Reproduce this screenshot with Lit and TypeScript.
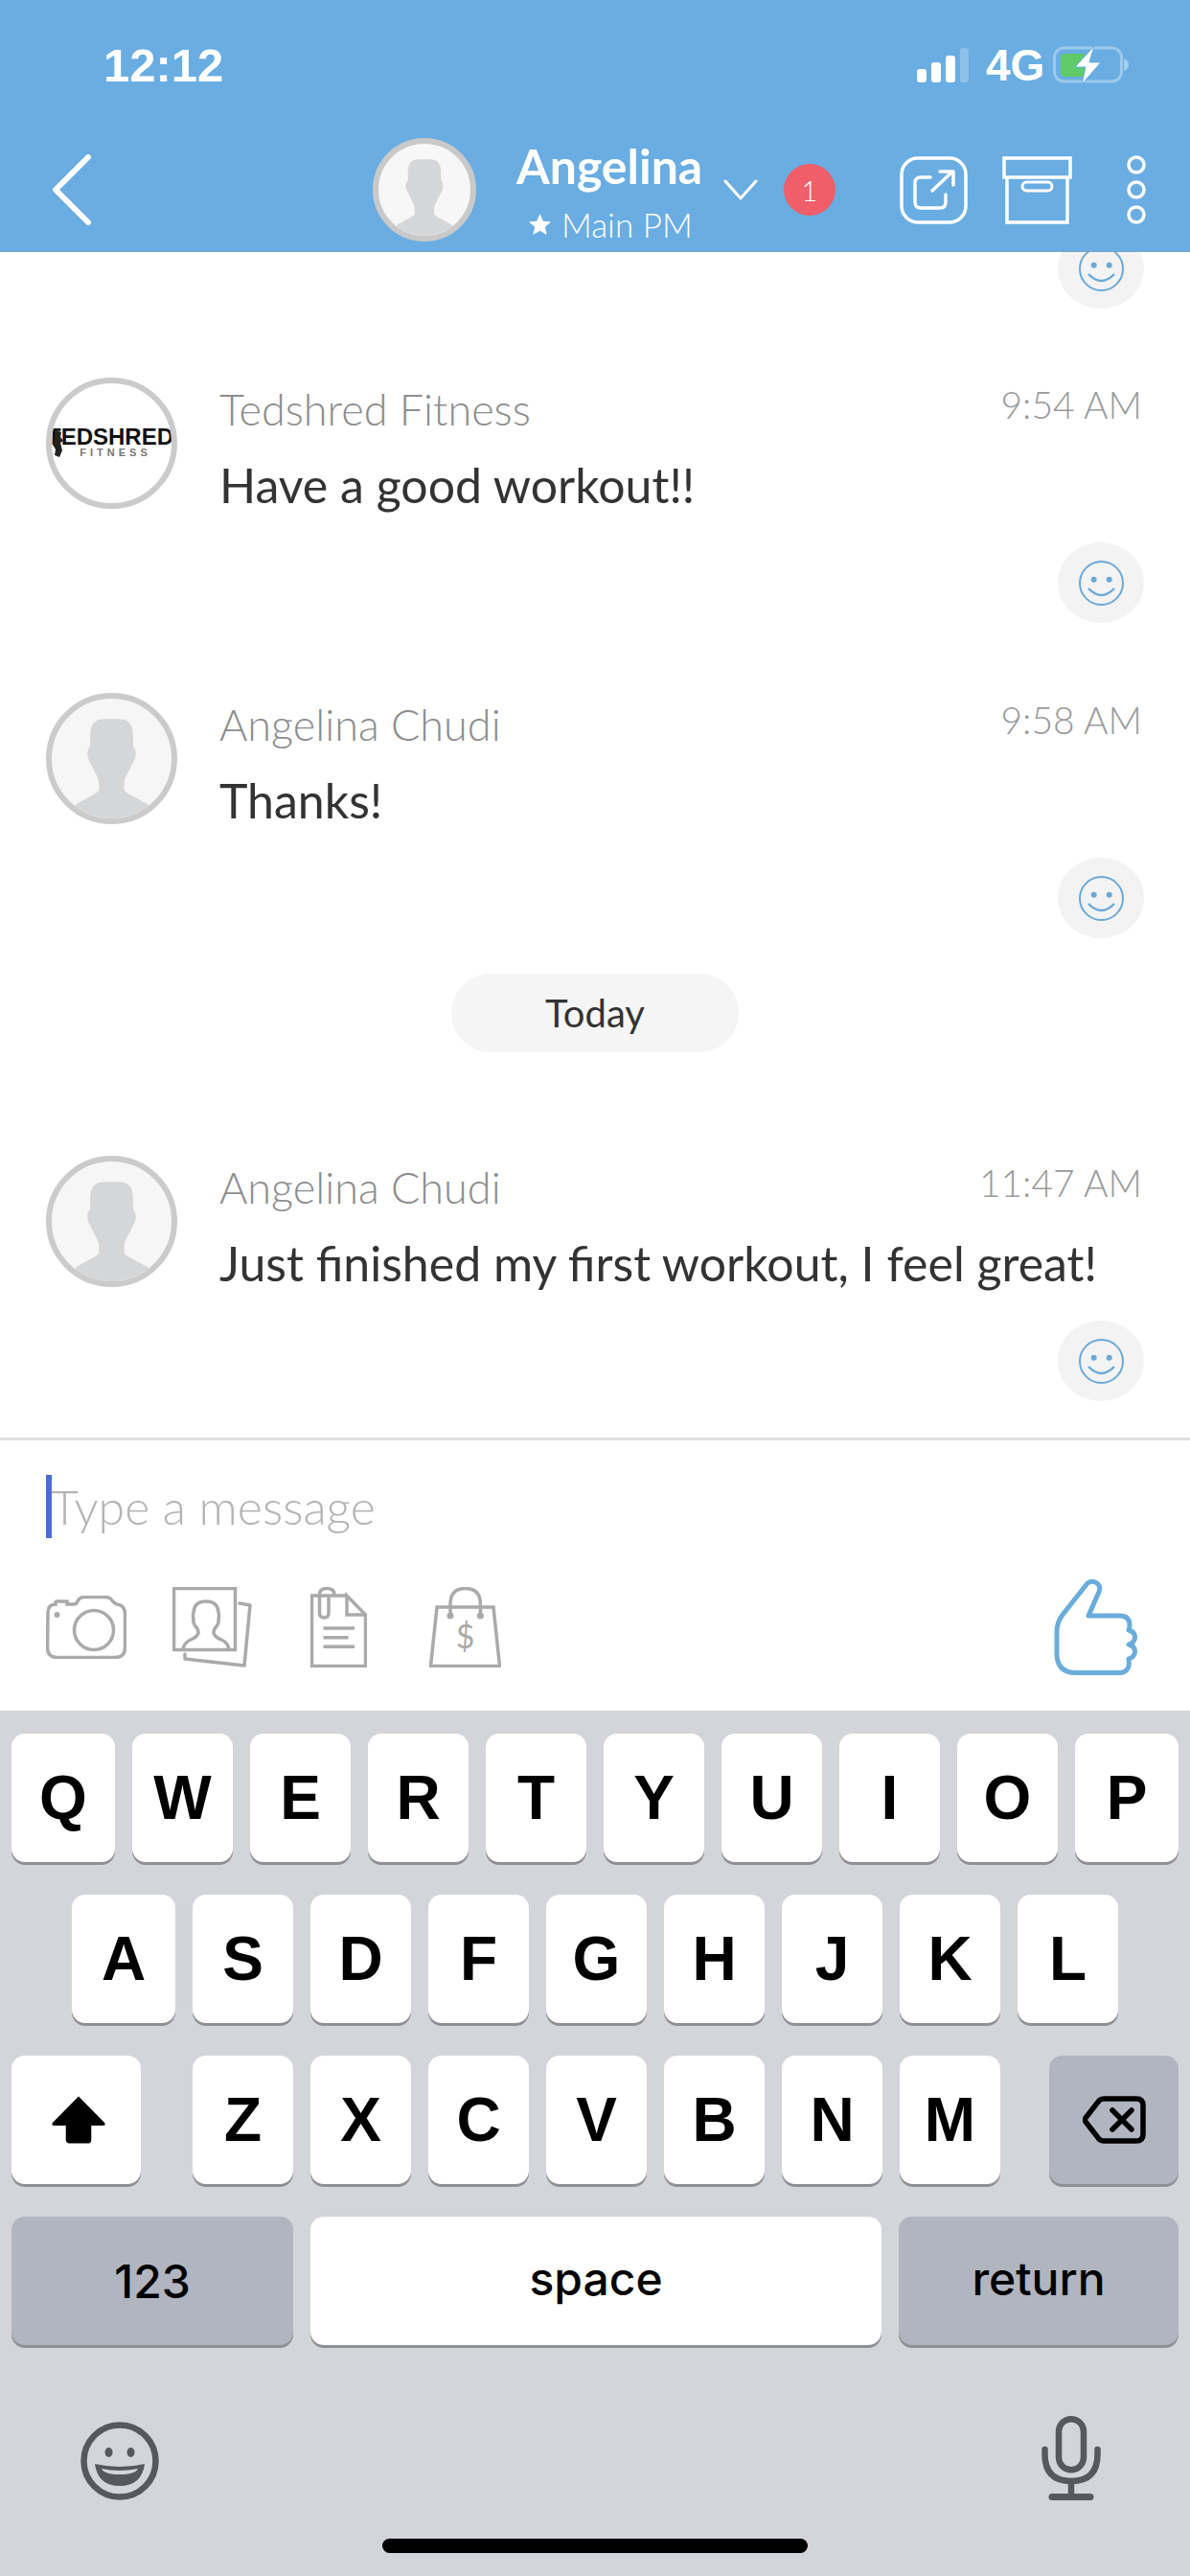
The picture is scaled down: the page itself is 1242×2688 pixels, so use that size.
import { LitElement, html, css } from "lit";
import { customElement } from "lit/decorators.js";

interface Message {
  name: string;
  time: string;
  text: string;
  logo?: boolean;
}

const BEFORE_TODAY: Message[] = [
  { name: "Tedshred Fitness", time: "9:54 AM", text: "Have a good workout!!", logo: true },
  { name: "Angelina Chudi", time: "9:58 AM", text: "Thanks!" },
];
const AFTER_TODAY: Message[] = [
  { name: "Angelina Chudi", time: "11:47 AM", text: "Just finished my first workout, I feel great!" },
];

const ROW1 = ["Q", "W", "E", "R", "T", "Y", "U", "I", "O", "P"];
const ROW2 = ["A", "S", "D", "F", "G", "H", "J", "K", "L"];
const ROW3 = ["Z", "X", "C", "V", "B", "N", "M"];
// Q, P and A are a touch wider than the rest of their rows.
const WIDE_KEYS = new Set(["Q", "P", "A"]);

const silhouette = html`
  <svg class="fill" viewBox="0 0 100 100">
    <path
      fill="#d5d6d8"
      d="M50 17C58 17 64 17 66 22C68 25 68 30 68 40C70 42 71 46 69.500 50C68 54 67 55 66 57C64 62 61 66 60.500 70V76C60.500 78 65 80 80 88L84 100H16L20.600 88C35 80 39.500 78 39.500 76V70C39 66 36 62 34 57C33 55 32 54 30.500 50C29 46 30 42 32 40C32 30 32 25 34 22C36 17 42 17 50 17Z"
    />
  </svg>
`;

const reaction = html`
  <div class="reaction-row">
    <div class="reaction">
      <svg width="47" height="47" viewBox="0 0 47 47" fill="none" stroke="#6aa9d8" stroke-width="2">
        <circle cx="23.5" cy="23.5" r="22.5" />
        <circle cx="15.7" cy="19.7" r="3" fill="#6aa9d8" stroke="none" />
        <circle cx="31.7" cy="19.7" r="3" fill="#6aa9d8" stroke="none" />
        <path d="M10 29Q23.5 43 37 29" stroke-width="2.5" />
      </svg>
    </div>
  </div>
`;

@customElement("app-root")
export class AppRoot extends LitElement {
  static styles = css`
    :host {
      display: block;
      width: 1242px;
      height: 2688px;
      font-family: Lato, "Open Sans", sans-serif;
      background: #fff;
      overflow: hidden;
    }
    .screen {
      display: flex;
      flex-direction: column;
      height: 2688px;
    }
    svg {
      display: block;
      flex: none;
    }
    .fill {
      width: 100%;
      height: 100%;
    }

    /* top bar */
    .top {
      height: 263px;
      flex: none;
      background: #69ade2;
      color: #fff;
      border-bottom: 1px solid #7fa3bf;
      box-sizing: border-box;
    }
    .status {
      height: 136px;
      display: flex;
      align-items: center;
      padding-left: 108px;
      font-family: "Liberation Sans", Arial, sans-serif;
      font-weight: 700;
    }
    .clock {
      font-size: 49px;
      line-height: 1;
      width: 849px;
    }
    .carrier {
      font-size: 46px;
      line-height: 1;
      margin-left: 18px;
      width: 70px;
    }
    .nav {
      height: 108px;
      margin-top: 8px;
      display: flex;
      align-items: center;
      padding-left: 53px;
    }
    .nav-avatar {
      width: 108px;
      height: 108px;
      margin-left: 292px;
      flex: none;
      box-sizing: border-box;
      border: 6px solid #c9c9c9;
      border-radius: 50%;
      overflow: hidden;
      background: #f7f7f7;
    }
    .title {
      width: 216px;
      margin-left: 42px;
      flex: none;
      display: flex;
      flex-direction: column;
      margin-top: 2px;
    }
    .title-name {
      font-size: 50px;
      line-height: 58px;
      font-weight: 700;
      white-space: nowrap;
    }
    .title-sub {
      display: flex;
      align-items: center;
      font-size: 35px;
      line-height: 40px;
      font-weight: 300;
      margin-left: 13px;
      gap: 11px;
      margin-top: 12px;
    }
    .badge {
      width: 54px;
      height: 54px;
      flex: none;
      margin-left: 27px;
      border-radius: 50%;
      background: #ee5f6a;
      display: flex;
      align-items: center;
      justify-content: center;
      font-size: 29px;
      font-weight: 300;
    }
    .share {
      margin-left: 67px;
    }
    .archive {
      margin-left: 36px;
    }
    .more {
      margin-left: 57px;
    }

    /* conversation */
    .thread {
      height: 1237px;
      flex: none;
      overflow: hidden;
      box-sizing: border-box;
    }
    .thread-lead {
      margin-top: -25px;
      margin-bottom: 72px;
    }
    .msg {
      margin-bottom: 73px;
    }
    .msg-row {
      display: flex;
      height: 172px;
      padding-left: 48px;
      box-sizing: border-box;
    }
    .avatar {
      position: relative;
      width: 137px;
      height: 137px;
      flex: none;
      box-sizing: border-box;
      border: 6px solid #cbcbcb;
      border-radius: 50%;
      overflow: hidden;
      background: #f6f6f6;
    }
    .avatar.logo {
      background: #fff;
      display: flex;
      flex-direction: column;
      align-items: center;
      justify-content: center;
      font-family: "Liberation Sans", Arial, sans-serif;
      color: #111;
    }
    .logo-main {
      font-size: 24px;
      line-height: 22px;
      font-weight: 700;
      white-space: nowrap;
      margin-top: -2px;
      margin-left: -3px;
    }
    .logo-sub {
      font-size: 11px;
      line-height: 11px;
      letter-spacing: 4px;
      color: #777;
      white-space: nowrap;
      font-weight: 700;
      margin-left: 8px;
    }
    .logo-runner {
      position: absolute;
      left: 1px;
      top: 48px;
    }
    .body {
      flex: none;
      width: 963px;
      margin-left: 44px;
      padding-top: 6px;
      box-sizing: border-box;
    }
    .body-head {
      display: flex;
      justify-content: space-between;
      height: 54px;
    }
    .sender {
      font-size: 45px;
      line-height: 54px;
      font-weight: 300;
      color: #8d8d8d;
    }
    .time {
      font-size: 39px;
      line-height: 44px;
      font-weight: 300;
      color: #9a9a9a;
    }
    .text {
      margin-top: 22px;
      font-size: 50px;
      line-height: 60px;
      font-weight: 400;
      color: #333;
      white-space: nowrap;
    }
    .reaction-row {
      display: flex;
      justify-content: flex-end;
      padding-right: 48px;
    }
    .reaction {
      width: 90px;
      height: 84px;
      border-radius: 50%;
      background: #f3f3f3;
      display: flex;
      align-items: center;
      justify-content: center;
    }
    .day-row {
      display: flex;
      justify-content: center;
      margin-top: -36px;
      margin-bottom: 108px;
    }
    .day {
      width: 300px;
      height: 82px;
      border-radius: 41px;
      background: #f5f5f5;
      display: flex;
      align-items: center;
      justify-content: center;
      font-size: 40px;
      color: #333;
    }

    /* composer */
    .composer {
      height: 285px;
      flex: none;
      box-sizing: border-box;
      border-top: 3px solid #dedede;
    }
    .input {
      display: flex;
      align-items: center;
      height: 66px;
      margin-top: 36px;
      padding-left: 48px;
    }
    .cursor {
      width: 6px;
      height: 66px;
      flex: none;
      background: #4b6bd6;
    }
    .placeholder {
      margin-left: -1px;
      font-size: 50px;
      font-weight: 300;
      color: #b4b4b4;
      line-height: 66px;
    }
    .tools {
      display: flex;
      align-items: center;
      height: 101px;
      margin-top: 42px;
      padding: 0 55px 0 48px;
    }
    .tools .camera {
      margin-right: 48px;
    }
    .tools .photos {
      margin-right: 61px;
    }
    .tools .doc {
      margin-right: 65px;
    }
    .tools .thumb {
      margin-left: auto;
    }

    /* keyboard */
    .keyboard {
      flex: 1;
      background: #d3d5da;
      padding-top: 24px;
      font-family: "Liberation Sans", Arial, sans-serif;
      color: #000;
    }
    .row {
      display: flex;
      gap: 18px;
      height: 134px;
      margin-bottom: 34px;
      padding-left: 12px;
    }
    .row.indented {
      padding-left: 75px;
    }
    .key {
      flex: none;
      width: 105px;
      height: 134px;
      background: #fff;
      border-radius: 14px;
      box-shadow: 0 3px 0 #8e9096;
      display: flex;
      align-items: center;
      justify-content: center;
      font-size: 64px;
      font-weight: 700;
    }
    .key.wide {
      width: 108px;
    }
    .key.gray {
      background: #b1b5bf;
    }
    .key.shift {
      width: 135px;
      margin-right: 36px;
      padding-left: 4px;
      box-sizing: border-box;
    }
    .key.back {
      width: 135px;
      margin-left: 33px;
    }
    .key.label {
      font-family: Inter, "Liberation Sans", sans-serif;
      font-size: 48px;
      font-weight: 500;
    }
    .key.num {
      width: 294px;
    }
    .key.space {
      width: 596px;
      padding-bottom: 6px;
      box-sizing: border-box;
    }
    .key.ret {
      width: 292px;
      padding-bottom: 6px;
      box-sizing: border-box;
    }
    .kb-bottom {
      display: flex;
      justify-content: space-between;
      align-items: flex-end;
      padding: 0 93px 0 84px;
      margin-top: 74px;
    }
    .home-row {
      display: flex;
      justify-content: center;
      margin-top: 40px;
    }
    .home {
      width: 444px;
      height: 15px;
      border-radius: 8px;
      background: #000;
    }
  `;

  private renderMessage(m: Message) {
    return html`
      <div class="msg">
        <div class="msg-row">
          ${m.logo
            ? html`<div class="avatar logo">
                <span class="logo-main">TEDSHRED</span>
                <span class="logo-sub">FITNESS</span>
                <svg class="logo-runner" width="12" height="30" viewBox="0 0 12 30" fill="#222">
                  <path d="M3 1l6 2-1 5 3 4-3 2 2 8-3 7-5-2 1-6-3-5 3-6z" />
                </svg>
              </div>`
            : html`<div class="avatar">${silhouette}</div>`}
          <div class="body">
            <div class="body-head">
              <span class="sender">${m.name}</span>
              <span class="time">${m.time}</span>
            </div>
            <div class="text">${m.text}</div>
          </div>
        </div>
        ${reaction}
      </div>
    `;
  }

  private renderLetter(k: string) {
    return html`<div class="key ${WIDE_KEYS.has(k) ? "wide" : ""}">${k}</div>`;
  }

  private renderStatusIcons() {
    return html`
      <svg width="54" height="36" viewBox="0 0 54 36" fill="#fff">
        <rect x="0" y="22" width="10" height="14" rx="3" />
        <rect x="15" y="15" width="10" height="21" rx="3" />
        <rect x="30" y="8" width="10" height="28" rx="3" />
        <rect x="45" y="0" width="9" height="36" rx="3" fill="#fff" opacity="0.25" />
      </svg>
      <span class="carrier">4G</span>
      <svg width="80" height="42" viewBox="0 0 80 42">
        <rect x="1.5" y="3" width="70" height="35" rx="10" fill="none" stroke="#fff" stroke-opacity="0.35" stroke-width="3" />
        <path d="M74 14q5 2 5 6.500t-5 6.500z" fill="#fff" fill-opacity="0.4" />
        <rect x="8" y="9" width="26" height="24" rx="4" fill="#5fcb68" />
        <path d="M43 1L23 23H34L30 41L50 18H38L43 1Z" fill="#fff" stroke="#69ade2" stroke-width="1" />
      </svg>
    `;
  }

  render() {
    return html`
      <div class="screen">
        <div class="top">
          <div class="status">
            <span class="clock">12:12</span>
            ${this.renderStatusIcons()}
          </div>
          <div class="nav">
            <svg width="44" height="74" viewBox="0 0 44 74" fill="none" stroke="#fff" stroke-width="6" stroke-linecap="round" stroke-linejoin="round">
              <path d="M39 3L5 37L39 71" />
            </svg>
            <div class="nav-avatar">${silhouette}</div>
            <div class="title">
              <span class="title-name">Angelina</span>
              <span class="title-sub">
                <svg width="23" height="22" viewBox="0 0 24 23" fill="#fff">
                  <path d="M12 0l3.500 8 8.500.8-6.400 5.700 1.900 8.500L12 18.500 4.500 23l1.900-8.500L0 8.800 8.500 8z" />
                </svg>
                Main PM
              </span>
            </div>
            <svg width="36" height="22" viewBox="0 0 36 22" fill="none" stroke="#fff" stroke-width="3" stroke-linecap="round" stroke-linejoin="round">
              <path d="M2 2L18 20L34 2" />
            </svg>
            <div class="badge">1</div>
            <svg class="share" width="71" height="71" viewBox="0 0 71 71" fill="none" stroke="#fff" stroke-width="3.500" stroke-linecap="round" stroke-linejoin="round">
              <rect x="2" y="2" width="67" height="67" rx="17" />
              <path d="M32 22H22Q16 22 16 28V48Q16 54 22 54H42Q48 54 48 48V40" />
              <path d="M34 36L55 16M42 16H56V30" />
            </svg>
            <svg class="archive" width="73" height="71" viewBox="0 0 73 71" fill="none" stroke="#fff" stroke-width="3.500">
              <rect x="2" y="2" width="69" height="20" />
              <path d="M5 22V69H68V22" />
              <rect x="21" y="27" width="31" height="9" rx="4.500" stroke-width="3" />
            </svg>
            <svg class="more" width="20" height="72" viewBox="0 0 20 72" fill="none" stroke="#fff" stroke-width="3.500">
              <circle cx="10" cy="10" r="8" />
              <circle cx="10" cy="36" r="8" />
              <circle cx="10" cy="62" r="8" />
            </svg>
          </div>
        </div>

        <div class="thread">
          <div class="thread-lead">${reaction}</div>
          ${BEFORE_TODAY.map((m) => this.renderMessage(m))}
          <div class="day-row"><div class="day">Today</div></div>
          ${AFTER_TODAY.map((m) => this.renderMessage(m))}
        </div>

        <div class="composer">
          <div class="input">
            <div class="cursor"></div>
            <span class="placeholder">Type a message</span>
          </div>
          <div class="tools">
            <svg class="camera" width="84" height="66" viewBox="0 0 84 66" fill="none" stroke="#aaa" stroke-width="3.500">
              <path d="M2 18Q2 9 10 9V7Q10 6 11 6H22V9H29Q32 9 33 6Q35 1.500 40 1.500H62Q67 1.500 69 5Q71 8 74 9Q82 10 82.500 18V54Q82.500 64.500 72 64.500H12Q1.500 64.500 1.500 54Z" />
              <circle cx="50" cy="36" r="20.500" />
              <circle cx="11.500" cy="20" r="3" fill="#aaa" stroke="none" />
            </svg>
            <svg class="photos" width="83" height="84" viewBox="0 0 83 84" fill="none" stroke="#aaa" stroke-width="3.500">
              <rect x="1.500" y="1.500" width="64" height="64" />
              <path d="M70 17L81 19L75 82L13 75V70" stroke-linejoin="round" stroke-linecap="round" />
              <path d="M11 65Q12 58 19 55Q26 52 27 48Q27 44 24 41Q21 37 22 33Q21 31 22 26Q23 15 35 15Q47 15 48 26Q49 31 48 33Q49 37 46 41Q43 44 43 48Q44 52 51 55Q58 58 59 65" />
            </svg>
            <svg class="doc" width="59" height="84" viewBox="0 0 59 84" fill="none" stroke="#aaa" stroke-width="3.500">
              <path d="M38 9H1.500V82.500H57.500V29L38 9V29H57.500" />
              <path d="M25 9V8Q25 1.500 17 1.500Q9.500 1.500 9.500 8V27Q9.500 32 14.500 32Q19 32 19 27V9" />
              <path d="M13.500 43H46M13.500 52.700H39.500M13.500 62.300H46" />
            </svg>
            <svg class="bag" width="75" height="84" viewBox="0 0 75 84" fill="none" stroke="#aaa" stroke-width="3.500">
              <path d="M8 21H67L73.500 82.500H1.500Z" />
              <path d="M22 30V18Q22 1.500 37.700 1.500Q53.400 1.500 53.400 18V30" />
              <circle cx="22" cy="30" r="3.500" fill="#aaa" stroke="none" />
              <circle cx="53.400" cy="30" r="3.500" fill="#aaa" stroke="none" />
              <text x="37.700" y="64" text-anchor="middle" font-size="34" font-family="Lato, sans-serif" fill="#aaa" stroke="none">$</text>
            </svg>
            <svg class="thumb" width="87" height="101" viewBox="0 0 87 101" fill="none" stroke="#6aaddc" stroke-width="5" stroke-linejoin="round">
              <path d="M35 5Q41 1 46 6Q49 9 47 14L36 39H69Q79 39 79 49Q79 52 78 54Q85 56 84.500 62Q84 67 78 69Q85 71 84.500 77Q84 82 78 84Q80 97 70 98.500H23Q4 98.500 3 80V55Q3 46 9 38Z" />
            </svg>
          </div>
        </div>

        <div class="keyboard">
          <div class="row">${ROW1.map((k) => this.renderLetter(k))}</div>
          <div class="row indented">${ROW2.map((k) => this.renderLetter(k))}</div>
          <div class="row">
            <div class="key shift">
              <svg width="58" height="50" viewBox="-1 0 59 50" fill="#000">
                <path d="M28.500 0L56 28Q58 31 54 31H42V46Q42 50 38 50H20Q15 50 15 46V31H3Q-1 31 1 28Z" />
              </svg>
            </div>
            ${ROW3.map((k) => this.renderLetter(k))}
            <div class="key gray back">
              <svg width="66" height="50" viewBox="0 0 66 50" fill="none" stroke="#000" stroke-width="5.500" stroke-linecap="round">
                <path d="M22 3H56Q63 3 63 10V40Q63 47 56 47H22Q19 47 17 45L3 27Q2 25 3 23L17 5Q19 3 22 3Z" />
                <path d="M31 15L51 35M51 15L31 35" />
              </svg>
            </div>
          </div>
          <div class="row">
            <div class="key gray label num">123</div>
            <div class="key label space">space</div>
            <div class="key gray label ret">return</div>
          </div>
          <div class="kb-bottom">
            <svg width="82" height="82" viewBox="0 0 82 82">
              <circle cx="41" cy="41" r="37.500" fill="none" stroke="#55585f" stroke-width="6.500" />
              <ellipse cx="29.500" cy="32" rx="4" ry="5" fill="#55585f" />
              <ellipse cx="52.500" cy="32" rx="4" ry="5" fill="#55585f" />
              <path d="M15 44Q41 50 67 44Q64 67 41 67Q18 67 15 44Z" fill="#55585f" />
              <path d="M22 49Q41 53 60 49Q57 55 41 55Q25 55 22 49Z" fill="#d3d5da" />
            </svg>
            <svg width="62" height="88" viewBox="0 0 62 88" fill="none" stroke="#55585f" stroke-width="6.500" stroke-linecap="round">
              <rect x="18" y="3.250" width="26" height="53" rx="13" />
              <path d="M3.500 35V40Q3.500 68 31 68Q58.500 68 58.500 40V35" />
              <path d="M31 68V82" />
              <path d="M11 84.500H51" stroke-width="7" />
            </svg>
          </div>
          <div class="home-row"><div class="home"></div></div>
        </div>
      </div>
    `;
  }
}
